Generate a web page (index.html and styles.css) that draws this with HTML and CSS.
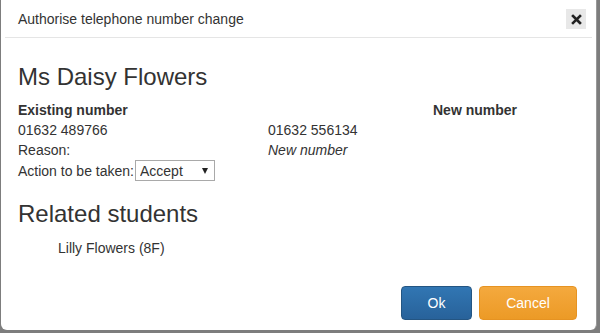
FILE: index.html
```html
<!DOCTYPE html>
<html lang="en">
<head>
    <meta charset="UTF-8">
    <title>Authorise telephone number change</title>
    <link rel="stylesheet" href="styles.css">
</head>
<body>
    <div class="modal">
        <div class="modal-header">
            <h4>Authorise telephone number change</h4>
            <button class="close-button" aria-label="Close">
                <svg width="11" height="11" viewBox="0 0 11 11">
                    <path d="M2 2 L9 9 M9 2 L2 9" stroke="#222" stroke-width="2.6" stroke-linecap="square"/>
                </svg>
            </button>
        </div>

        <div class="modal-body">
            <h3>Ms Daisy Flowers</h3>

            <div class="number-grid">
                <div class="label">Existing number</div>
                <div></div>
                <div class="label">New number</div>

                <div>01632 489766</div>
                <div>01632 556134</div>
                <div></div>

                <div>Reason:</div>
                <div class="reason">New number</div>
                <div></div>
            </div>

            <div class="action-row">
                <label for="action">Action to be taken:</label>
                <span class="select-wrap">
                    <select id="action">
                        <option>Accept</option>
                        <option>Reject</option>
                    </select>
                </span>
            </div>

            <h3 class="related-title">Related students</h3>
            <ul class="students">
                <li>Lilly Flowers (8F)</li>
            </ul>
        </div>

        <div class="modal-footer">
            <button class="ok-button">Ok</button>
            <button class="cancel-button">Cancel</button>
        </div>
    </div>
</body>
</html>
```

FILE: styles.css
```css
body {
    font-family: 'Liberation Sans', Arial, sans-serif;
    background-color: #7d7d7d;
    margin: 0;
    padding: 0;
    color: #333;
    font-size: 14px;
}

.modal {
    width: 596px;
    height: 330px;
    margin: 0 0 0 1px;
    background: white;
    border-radius: 0 0 6px 6px;
    border-right: 1px solid #999;
    box-sizing: border-box;
    display: flex;
    flex-direction: column;
}

.modal-header {
    display: flex;
    align-items: center;
    justify-content: space-between;
    margin: 0 4px;
    padding: 9px 6px 0 13px;
    height: 28px;
    border-bottom: 1px solid #e5e5e5;
}

.modal-header h4 {
    margin: 0 0 8px;
    font-size: 14px;
    font-weight: normal;
    color: #333;
}

.close-button {
    width: 20px;
    height: 20px;
    margin-bottom: 8px;
    padding: 0;
    border: none;
    background-color: #e8e8e8;
    display: flex;
    align-items: center;
    justify-content: center;
    cursor: pointer;
}

.modal-body {
    flex: 1;
    padding: 26px 17px 0 17px;
}

.modal-body h3 {
    margin: 0 0 10px;
    font-size: 24px;
    font-weight: normal;
    line-height: 26px;
    color: #333;
}

.number-grid {
    display: grid;
    grid-template-columns: 250px 165px 1fr;
    line-height: 20px;
}

.label {
    font-weight: bold;
}

.reason {
    font-style: italic;
}

.action-row {
    display: flex;
    align-items: center;
    height: 21px;
}

.select-wrap {
    position: relative;
    margin-left: 1px;
}

.select-wrap::after {
    content: "";
    position: absolute;
    right: 7px;
    top: 8px;
    border-left: 3.5px solid transparent;
    border-right: 3.5px solid transparent;
    border-top: 6px solid #222;
    pointer-events: none;
}

.select-wrap select {
    display: block;
    appearance: none;
    -webkit-appearance: none;
    font-family: 'Liberation Sans', Arial, sans-serif;
    font-size: 14px;
    width: 80px;
    height: 21px;
    padding: 0 4px;
    border: 1px solid #a9a9a9;
    border-radius: 0;
    background: white;
    color: #333;
}

.modal-body .related-title {
    margin: 20px 0 11px;
}

.students {
    list-style: none;
    margin: 0;
    padding: 0 0 0 40px;
    line-height: 20px;
}

.modal-footer {
    display: flex;
    justify-content: flex-end;
    gap: 7px;
    padding: 0 19px 10px;
}

.ok-button, .cancel-button {
    font-family: 'Liberation Sans', Arial, sans-serif;
    font-size: 14px;
    color: white;
    border-radius: 4px;
    height: 34px;
    cursor: pointer;
}

.ok-button {
    width: 71px;
    background: linear-gradient(#3176b3, #28629a);
    border: 1px solid #245582;
}

.cancel-button {
    width: 98px;
    background: linear-gradient(#f4a93e, #ec9a26);
    border: 1px solid #e69322;
}
```
